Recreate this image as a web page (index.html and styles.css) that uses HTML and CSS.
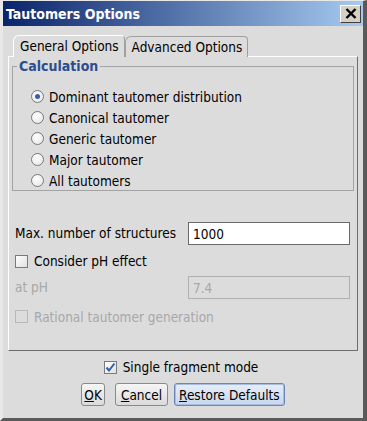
FILE: index.html
```html
<!DOCTYPE html>
<html lang="en">
<head>
    <meta charset="UTF-8">
    <title>Tautomers Options</title>
    <link rel="stylesheet" href="styles.css">
</head>
<body>
    <div class="window">
        <div class="titlebar">
            <span class="title">Tautomers Options</span>
            <span class="close">
                <svg width="12" height="11" viewBox="0 0 12 11"><path d="M1.5 1l9 9M10.5 1l-9 9" stroke="#000" stroke-width="2.4" fill="none"/></svg>
            </span>
        </div>
        <div class="content">
            <div class="tabs">
                <div class="tab active">General Options</div>
                <div class="tab">Advanced Options</div>
            </div>
            <div class="panel">
                <fieldset class="group">
                    <legend>Calculation</legend>
                    <label class="option"><span class="radio checked"></span>Dominant tautomer distribution</label>
                    <label class="option"><span class="radio"></span>Canonical tautomer</label>
                    <label class="option"><span class="radio"></span>Generic tautomer</label>
                    <label class="option"><span class="radio"></span>Major tautomer</label>
                    <label class="option"><span class="radio"></span>All tautomers</label>
                </fieldset>
                <div class="form">
                    <div class="row field-row">
                        <span class="label">Max. number of structures</span>
                        <span class="input">1000</span>
                    </div>
                    <label class="row check-row"><span class="check"></span>Consider pH effect</label>
                    <div class="row field-row disabled">
                        <span class="label">at pH</span>
                        <span class="input">7.4</span>
                    </div>
                    <label class="row check-row last disabled"><span class="check"></span>Rational tautomer generation</label>
                </div>
            </div>
            <label class="single"><span class="check checked">
                <svg width="11" height="11" viewBox="0 0 11 11"><path d="M1.5 5.5l2.5 3 5.5-7" fill="none" stroke="#2f5ea8" stroke-width="2"/></svg>
            </span>Single fragment mode</label>
            <div class="buttons">
                <button class="btn ok"><u>O</u>K</button>
                <button class="btn cancel"><u>C</u>ancel</button>
                <button class="btn focused"><u>R</u>estore Defaults</button>
            </div>
        </div>
    </div>
</body>
</html>
```

FILE: styles.css
```css
body {
    margin: 0;
    font-family: Tahoma, "DejaVu Sans Condensed", "Liberation Sans", sans-serif;
    font-size: 13.5px;
    color: #000;
    background: #dcdcdc;
}
.window {
    width: 367px;
    height: 421px;
    box-sizing: border-box;
    background: #dcdcdc;
    border-top: 1px solid #e8e8e8;
    border-left: 3px solid #e8e8e8;
    border-right: 4px solid #5a5a5a;
    border-bottom: 3px solid #5a5a5a;
}
.titlebar {
    height: 25px;
    background: linear-gradient(to right, #0a246a, #a6caf0);
    display: flex;
    align-items: center;
    justify-content: space-between;
    padding: 0 2px 0 3px;
}
.title {
    color: #fff;
    font-weight: bold;
    font-size: 14px;
    font-family: "DejaVu Sans Condensed", "Liberation Sans", sans-serif;
}
.close {
    width: 21px;
    height: 18px;
    box-sizing: border-box;
    background: #d4d0c8;
    border: 1px solid;
    border-color: #fff #404040 #404040 #fff;
    display: flex;
    align-items: center;
    justify-content: center;
}
.content {
    padding: 9px 5px 0 5px;
}
.tabs {
    display: flex;
    padding-left: 5px;
    height: 22px;
}
.tab {
    padding: 2px 5px 0 6px;
    border: 1px solid #a0a0a0;
    border-bottom: none;
    border-radius: 6px 4px 0 0;
    background: #dcdcdc;
    height: 21px;
    box-sizing: border-box;
    margin-top: 1px;
}
.tab.active {
    margin-top: 0;
    height: 22px;
    border-left-color: #fff;
    border-top-color: #fff;
    position: relative;
    z-index: 1;
}
.panel {
    height: 295px;
    box-sizing: border-box;
    border: 1px solid;
    border-color: #fff #6e6e6e #6e6e6e #fff;
    padding: 0 3px;
    margin-top: -1px;
}
.group {
    margin: 1px 0 0 0;
    padding: 12px 0 0 18px;
    height: 133px;
    box-sizing: border-box;
    border: 1px solid #a3a3a3;
}
.group legend {
    padding: 0 2px;
    margin-left: -14px;
    font-weight: bold;
    font-size: 14px;
    color: #2d4d8f;
    font-family: "DejaVu Sans Condensed", "Liberation Sans", sans-serif;
}
.option {
    display: flex;
    align-items: center;
    height: 21px;
    gap: 5px;
}
.radio {
    width: 13px;
    height: 13px;
    box-sizing: border-box;
    border-radius: 50%;
    border: 1px solid #7a7a7a;
    background: radial-gradient(circle at 40% 35%, #fff, #e2e2e2);
    display: flex;
    align-items: center;
    justify-content: center;
}
.radio.checked::after {
    content: '';
    width: 5px;
    height: 5px;
    border-radius: 50%;
    background: #3b5ea8;
}
.form {
    padding: 30px 0 0 3px;
}
.row {
    display: flex;
    align-items: center;
}
.field-row {
    height: 24px;
}
.field-row .label {
    width: 173px;
}
.input {
    width: 162px;
    height: 23px;
    box-sizing: border-box;
    border: 1px solid #6a6a6a;
    background: #fff;
    padding: 2px 0 0 4px;
    display: flex;
    align-items: center;
}
.check-row {
    height: 30px;
    padding-top: 2px;
    box-sizing: border-box;
    gap: 6px;
}
.check-row.last {
    height: 33px;
}
.check {
    width: 13px;
    height: 13px;
    box-sizing: border-box;
    border: 1px solid #7a7a7a;
    background: linear-gradient(135deg, #fff, #e0e0e0);
    display: flex;
    align-items: center;
    justify-content: center;
}
.disabled {
    color: #a8a8a8;
}
.disabled .input {
    background: #dcdcdc;
    border-color: #b0b0b0;
}
.disabled .check {
    border-color: #b8b8b8;
    background: #dcdcdc;
}
.single {
    display: flex;
    align-items: center;
    justify-content: center;
    gap: 6px;
    height: 32px;
    padding-right: 4px;
}
.buttons {
    display: flex;
    justify-content: center;
    gap: 6px;
}
.btn {
    font: inherit;
    color: #000;
    height: 23px;
    padding: 0 4px;
    border: 1px solid #8a8a8a;
    border-radius: 3px;
    background: linear-gradient(#f6f6f6, #dadada);
}
.btn.ok {
    padding: 0 2px;
    margin-right: 4px;
}
.btn.cancel {
    padding: 0 5px;
}
.btn.focused {
    border-color: #6a86b8;
    background: linear-gradient(#e8eef8, #c8d6ec);
    box-shadow: inset 0 0 0 1px #a8bedf;
}
```
